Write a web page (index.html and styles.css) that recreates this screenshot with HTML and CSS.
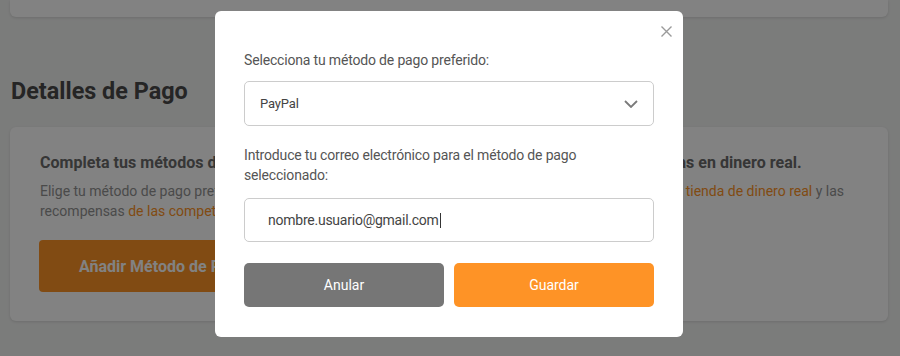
FILE: index.html
```html
<!DOCTYPE html>
<html lang="es">
<head>
<meta charset="utf-8">
<title>Detalles de Pago</title>
<link rel="stylesheet" href="styles.css">
</head>
<body>
<main class="page">
  <section class="card card-top"></section>
  <h2 class="section-title">Detalles de Pago</h2>
  <section class="card card-pay">
    <h3 class="pay-title">Completa tus métodos de pago para poder canjear tus premios y obtener tus recompensas en dinero real.</h3>
    <p class="pay-text">Elige tu método de pago preferido para poder percibir los pagos de todos los productos canjeados en <a class="link" href="#">la tienda de dinero real</a> y las recompensas <a class="link" href="#">de las competiciones</a>.</p>
    <button class="add-btn" type="button">Añadir Método de Pago</button>
  </section>
</main>

<div class="overlay">
  <div class="modal" role="dialog">
    <button class="close" type="button" aria-label="Cerrar">
      <svg width="11" height="11" viewBox="0 0 11 11"><path d="M0.5 0.5L10.5 10.5M10.5 0.5L0.5 10.5" stroke="#9a9a9a" stroke-width="1.4" fill="none"/></svg>
    </button>
    <p class="label">Selecciona tu método de pago preferido:</p>
    <div class="select">
      <span class="select-value">PayPal</span>
      <svg class="chevron" width="14" height="8" viewBox="0 0 14 8"><path d="M1 1L7 7L13 1" stroke="#7a7a7a" stroke-width="1.8" fill="none"/></svg>
    </div>
    <p class="label label-2">Introduce tu correo electrónico para el método de pago seleccionado:</p>
    <div class="input"><span class="input-value">nombre.usuario@gmail.com</span><span class="caret"></span></div>
    <div class="actions">
      <button class="btn btn-cancel" type="button">Anular</button>
      <button class="btn btn-save" type="button">Guardar</button>
    </div>
  </div>
</div>
</body>
</html>
```
FILE: styles.css
```css
* { box-sizing: border-box; }
html, body { margin: 0; padding: 0; }
body {
  background: #f2f3f2;
  font-family: Roboto, "Liberation Sans", Arial, sans-serif;
  width: 900px;
  height: 356px;
  overflow: hidden;
}
.page {
  padding: 0 12px 0 10px;
}
.card {
  background: #ffffff;
  border-radius: 6px;
  box-shadow: 0 1px 3px rgba(0,0,0,0.12);
}
.card-top {
  height: 17px;
  border-radius: 0 0 6px 6px;
}
.section-title {
  margin: 60px 0 0 1px;
  font-size: 23.4px;
  line-height: 28px;
  font-weight: 700;
  color: #4a4a4a;
}
.card-pay {
  margin-top: 22px;
  padding: 26px 30px 29px;
  height: 194px;
}
.pay-title {
  margin: 0;
  font-size: 16px;
  line-height: 20px;
  font-weight: 700;
  letter-spacing: 0.04px;
  color: #6a6a6a;
  white-space: nowrap;
}
.pay-text {
  margin: 8px 0 0;
  font-size: 14px;
  line-height: 20px;
  color: #929292;
}
.link {
  color: #fe9326;
  text-decoration: none;
}
.add-btn {
  margin-top: 19px;
  margin-left: -1px;
  height: 52px;
  padding: 0 40px;
  border: none;
  border-radius: 4px;
  background: #fe9326;
  color: #ffffff;
  font-family: inherit;
  font-size: 16px;
  font-weight: 700;
}
.overlay {
  position: fixed;
  inset: 0;
  background: rgba(0,0,0,0.49);
  display: flex;
  justify-content: flex-start;
  align-items: flex-start;
  padding: 11px 0 0 215px;
}
.modal {
  position: relative;
  width: 468px;
  height: 326px;
  background: #ffffff;
  border-radius: 6px;
  padding: 39px 29px 30px;
}
.close {
  position: absolute;
  top: 15px;
  right: 11px;
  width: 11px;
  height: 11px;
  padding: 0;
  border: none;
  background: none;
  display: block;
}
.close svg { display: block; }
.label {
  margin: 0;
  font-size: 14px;
  line-height: 20px;
  letter-spacing: -0.17px;
  color: #555555;
}
.label-2 {
  margin-top: 19px;
  padding-right: 60px;
}
.select {
  margin-top: 11px;
  height: 45px;
  border: 1px solid #cccccc;
  border-radius: 5px;
  display: flex;
  align-items: center;
  justify-content: space-between;
  padding: 0 15px 0 15px;
}
.select-value {
  font-size: 13px;
  letter-spacing: -0.15px;
  color: #444444;
}
.chevron { display: block; margin-top: 1px; }
.input {
  margin-top: 13px;
  height: 44px;
  border: 1px solid #cccccc;
  border-radius: 5px;
  display: flex;
  align-items: center;
  padding: 0 0 0 23px;
}
.input-value {
  font-size: 14px;
  letter-spacing: -0.24px;
  color: #444444;
}
.caret {
  width: 1px;
  height: 15px;
  background: #333333;
  margin-left: 1px;
}
.actions {
  margin-top: 21px;
  display: flex;
  gap: 10px;
}
.btn {
  flex: 1;
  height: 44px;
  border: none;
  border-radius: 5px;
  font-family: inherit;
  font-size: 14px;
  color: #ffffff;
}
.btn-cancel { background: #767676; }
.btn-save { background: #fe9326; }
```
